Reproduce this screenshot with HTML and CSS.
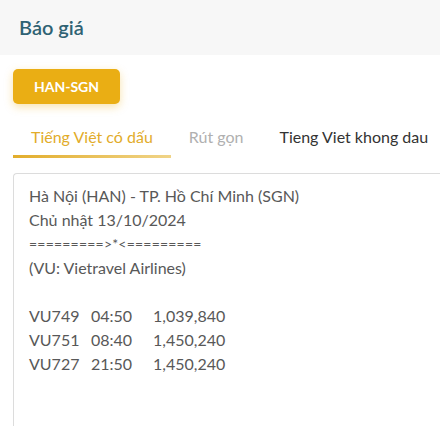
FILE: index.html
```html
<!DOCTYPE html>
<html lang="vi">
<head>
<meta charset="utf-8">
<link rel="stylesheet" href="styles.css">
</head>
<body>
<header class="header"><h1 class="title">Báo giá</h1></header>
<main class="content">
  <div class="routes"><button class="route-btn">HAN-SGN</button></div>
  <nav class="tabs">
    <span class="tab active">Tiếng Việt có dấu</span>
    <span class="tab muted">Rút gọn</span>
    <span class="tab">Tieng Viet khong dau</span>
  </nav>
  <div class="box">
    <div class="line">Hà Nội (HAN) - TP. Hồ Chí Minh (SGN)</div>
    <div class="line">Chủ nhật 13/10/2024</div>
    <div class="line sep">=========&gt;*&lt;=========</div>
    <div class="line">(VU: Vietravel Airlines)</div>
    <div class="line blank"></div>
    <div class="flight"><span>VU749</span><span>04:50</span><span>1,039,840</span></div>
    <div class="flight"><span>VU751</span><span>08:40</span><span>1,450,240</span></div>
    <div class="flight"><span>VU727</span><span>21:50</span><span>1,450,240</span></div>
  </div>
</main>
</body>
</html>
```
FILE: styles.css
```css
html, body {
  margin: 0;
  padding: 0;
  background: #ffffff;
  font-family: Lato, "Noto Sans", sans-serif;
  overflow: hidden;
  height: 426px;
}
.header {
  background: #f7f7f7;
  height: 55px;
  display: flex;
  align-items: center;
  padding-left: 19px;
  box-sizing: border-box;
}
.title {
  margin: 0;
  font-size: 20px;
  font-weight: 600;
  color: #2f6273;
  position: relative;
  top: -1px;
}
.content {
  padding: 14px 0 0 13px;
}
.routes {
  display: flex;
}
.route-btn {
  width: 107px;
  height: 35px;
  border: none;
  border-radius: 5px;
  background: #eaae14;
  color: #ffffff;
  font-family: Lato, sans-serif;
  font-weight: 700;
  font-size: 14px;
  box-shadow: 0 3px 8px rgba(234, 174, 20, 0.35);
  padding: 0;
}
.tabs {
  display: flex;
  margin-top: 20px;
  height: 34px;
  align-items: flex-start;
}
.tab {
  padding: 0 18px;
  font-size: 16px;
  line-height: 26px;
  color: #333;
  white-space: nowrap;
  height: 31px;
  box-sizing: border-box;
}
.tab.active {
  color: #e2ac2a;
  border-bottom: 3px solid transparent;
  border-image: linear-gradient(to right, #e2ad2b, #f0d488) 1;
  height: 34px;
}
.tab.muted {
  color: #b0b0b0;
}
.box {
  margin-top: 15px;
  border: 1px solid #dcdcdc;
  border-right: none;
  border-bottom: none;
  border-top-left-radius: 4px;
  padding: 10px 0 0 15px;
  height: 260px;
  color: #585858;
  font-size: 16px;
}
.line {
  line-height: 24px;
  height: 24px;
  white-space: pre;
}
.sep {
  font-size: 14px;
  letter-spacing: 0.2px;
}
.flight {
  display: grid;
  grid-template-columns: 62px 62px auto;
  line-height: 24px;
  height: 24px;
}
```
